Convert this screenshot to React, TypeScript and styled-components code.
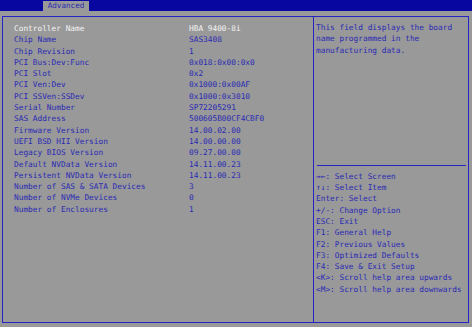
import React from "react";
import styled, { createGlobalStyle } from "styled-components";

const Global = createGlobalStyle`
  html, body {
    margin: 0;
    padding: 0;
    background: #999999;
  }
  body {
    width: 472px;
    height: 327px;
    overflow: hidden;
    font-family: "DejaVu Sans Mono", "Liberation Mono", monospace;
  }
`;

const TopBar = styled.div`
  height: 11px;
  background: #0808a0;
  display: flex;
  align-items: flex-end;
  padding-left: 43px;
`;

const Tab = styled.div`
  width: 46px;
  height: 10px;
  background: #999999;
  color: #2a2ab4;
  font-size: 7.6px;
  line-height: 10px;
  text-align: center;
`;

const Frame = styled.div`
  margin: 5px 3px 0 2px;
  height: 305px;
  border: 1px solid #2424c4;
  display: grid;
  grid-template-columns: 310px 1px 1fr;
`;

const Divider = styled.div`
  background: #2424c4;
`;

const List = styled.div`
  padding: 6px 0 0 11px;
`;

const Row = styled.div`
  display: grid;
  grid-template-columns: 175px 1fr;
  height: 11.3px;
  line-height: 11.3px;
  font-size: 7.8px;
  white-space: pre;
  color: ${(p: { $active?: boolean }) => (p.$active ? "#f4f4f4" : "#2a2ab4")};
`;

const Side = styled.div`
  display: flex;
  flex-direction: column;
  padding: 5px 1px 0 2px;
  color: #2a2ab4;
  font-size: 7.8px;
  line-height: 11.3px;
  white-space: pre;
`;

const HelpText = styled.div`
  flex: 1;
`;

const Rule = styled.div`
  height: 1px;
  background: #2424c4;
  margin: 0 1px 5px 1px;
`;

const Keys = styled.div`
  padding-bottom: 27px;
`;

const rows: [string, string][] = [
  ["Controller Name", "HBA 9400-8i"],
  ["Chip Name", "SAS3408"],
  ["Chip Revision", "1"],
  ["PCI Bus:Dev:Func", "0x018:0x00:0x0"],
  ["PCI Slot", "0x2"],
  ["PCI Ven:Dev", "0x1000:0x00AF"],
  ["PCI SSVen:SSDev", "0x1000:0x3010"],
  ["Serial Number", "SP72205291"],
  ["SAS Address", "500605B00CF4CBF0"],
  ["Firmware Version", "14.00.02.00"],
  ["UEFI BSD HII Version", "14.00.00.00"],
  ["Legacy BIOS Version", "09.27.00.00"],
  ["Default NVData Version", "14.11.00.23"],
  ["Persistent NVData Version", "14.11.00.23"],
  ["Number of SAS & SATA Devices", "3"],
  ["Number of NVMe Devices", "0"],
  ["Number of Enclosures", "1"],
];

const keys = [
  "→←: Select Screen",
  "↑↓: Select Item",
  "Enter: Select",
  "+/-: Change Option",
  "ESC: Exit",
  "F1: General Help",
  "F2: Previous Values",
  "F3: Optimized Defaults",
  "F4: Save & Exit Setup",
  "<K>: Scroll help area upwards",
  "<M>: Scroll help area downwards",
];

export default function App() {
  return (
    <>
      <Global />
      <TopBar>
        <Tab>Advanced</Tab>
      </TopBar>
      <Frame>
        <List>
          {rows.map(([label, value], i) => (
            <Row key={label} $active={i === 0}>
              <span>{label}</span>
              <span>{value}</span>
            </Row>
          ))}
        </List>
        <Divider />
        <Side>
          <HelpText>
            {"This field displays the board\nname programmed in the\nmanufacturing data."}
          </HelpText>
          <Rule />
          <Keys>
            {keys.map((k) => (
              <div key={k}>{k}</div>
            ))}
          </Keys>
        </Side>
      </Frame>
    </>
  );
}
